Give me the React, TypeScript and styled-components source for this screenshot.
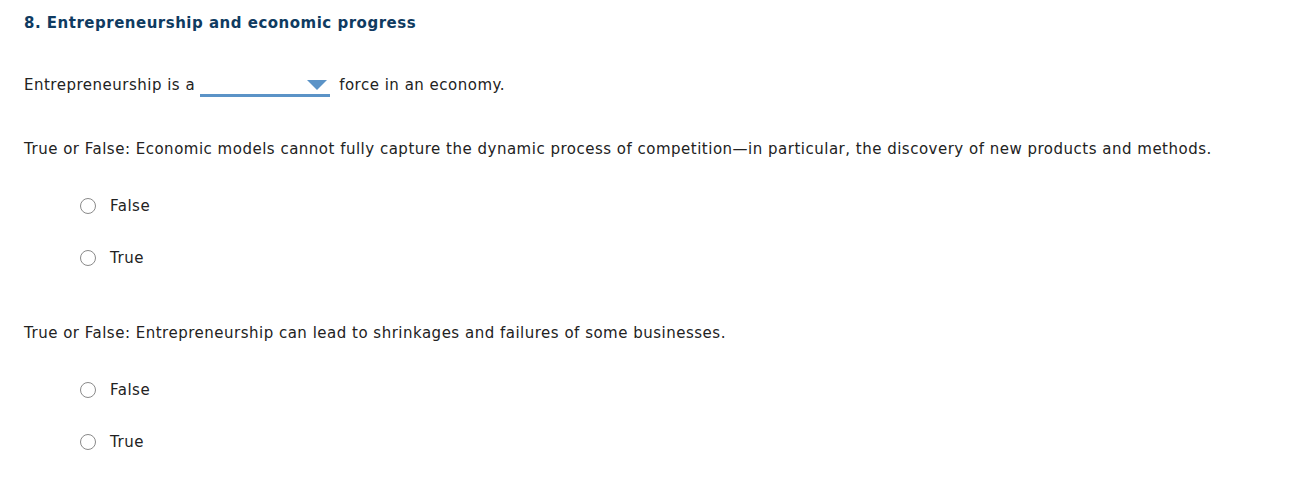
import React from "react";
import styled, { createGlobalStyle } from "styled-components";

const Global = createGlobalStyle`
  html, body { margin: 0; padding: 0; background: #fff; }
  body { font-family: Verdana, "DejaVu Sans", sans-serif; color: #222; letter-spacing: 0.5px; }
`;

const Page = styled.div`
  padding: 13px 24px 0 24px;
`;

const Heading = styled.h2`
  margin: 0;
  font-size: 15px;
  line-height: 20px;
  font-weight: bold;
  color: #0f3b61;
`;

const Sentence = styled.div`
  margin-top: 40px;
  font-size: 15px;
  line-height: 20px;
  display: flex;
  align-items: flex-end;
  white-space: pre;
`;

const Select = styled.span`
  display: inline-flex;
  justify-content: flex-end;
  align-items: center;
  width: 130px;
  height: 22px;
  margin: 0 9px 0 5px;
  border-bottom: 3px solid #5b93c7;
  box-sizing: border-box;
  padding-right: 3px;
  position: relative;
  top: 2px;
`;

const Question = styled.div<{ $gap: number }>`
  margin-top: ${(p) => p.$gap}px;
  font-size: 15px;
  line-height: 20px;
`;

const Options = styled.div`
  display: flex;
  flex-direction: column;
  gap: 32px;
  margin-top: 37px;
  padding-left: 56px;
`;

const Option = styled.label`
  display: flex;
  align-items: center;
  gap: 14px;
  font-size: 15px;
  line-height: 20px;
`;

const Radio = styled.span`
  display: inline-block;
  width: 16px;
  height: 16px;
  border: 1px solid #8a8a8a;
  border-radius: 50%;
  box-sizing: border-box;
`;

const RadioGroup = ({ items }: { items: string[] }) => (
  <Options>
    {items.map((t) => (
      <Option key={t}>
        <Radio />
        {t}
      </Option>
    ))}
  </Options>
);

export default function App() {
  return (
    <>
      <Global />
      <Page>
        <Heading>8. Entrepreneurship and economic progress</Heading>
        <Sentence>
          Entrepreneurship is a
          <Select>
            <svg width="20" height="10" viewBox="0 0 20 10">
              <polygon points="0,0 20,0 10,10" fill="#5b93c7" />
            </svg>
          </Select>
          force in an economy.
        </Sentence>
        <Question $gap={44}>
          True or False: Economic models cannot fully capture the dynamic process of competition—in particular, the discovery of new products and methods.
        </Question>
        <RadioGroup items={["False", "True"]} />
        <Question $gap={55}>
          True or False: Entrepreneurship can lead to shrinkages and failures of some businesses.
        </Question>
        <RadioGroup items={["False", "True"]} />
      </Page>
    </>
  );
}
